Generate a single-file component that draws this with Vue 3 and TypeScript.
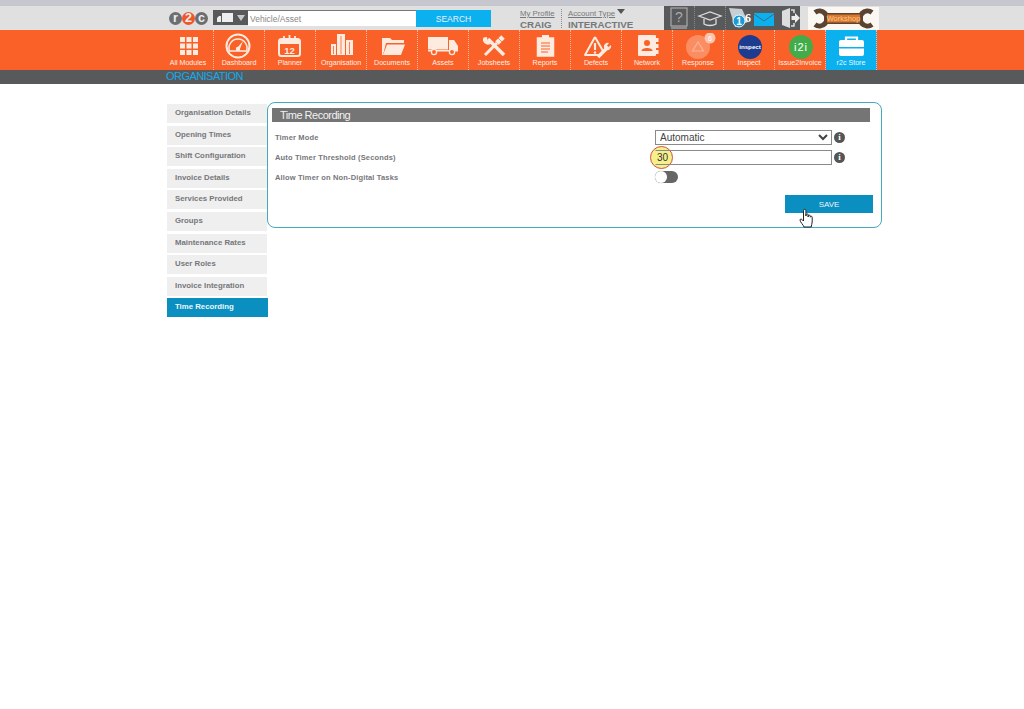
<script setup lang="ts">
interface NavItem { label: string; icon: string; active?: boolean }
const c = '#fdebdf'
const o = '#fa6128'
const squares = [0, 1, 2].flatMap(r => [0, 1, 2].map(k => `<rect x="${17 + k * 6.5}" y="${4 + r * 6.5}" width="5" height="5" fill="${c}"/>`)).join('')
const nav: NavItem[] = [
  { label: 'All Modules', icon: squares },
  { label: 'Dashboard', icon: `<circle cx="24" cy="13" r="11.5" fill="none" stroke="${c}" stroke-width="2"/><path d="M15.500 18a9 9 0 1 1 17 0z" fill="none" stroke="${c}" stroke-width="1.500"/><path d="M23 15l6-7-3.500 9z" fill="${c}"/><circle cx="24" cy="16" r="2.200" fill="${c}"/>` },
  { label: 'Planner', icon: `<rect x="14" y="6" width="21" height="17" rx="2.500" fill="none" stroke="${c}" stroke-width="2"/><rect x="14" y="6" width="21" height="5" fill="${c}"/><path d="M19 3v5M24.500 2v6M30 3v5" stroke="${c}" stroke-width="1.800"/><text x="24.500" y="21" font-size="9.500" font-weight="700" text-anchor="middle" fill="${c}" font-family="Liberation Sans">12</text>` },
  { label: 'Organisation', icon: `<path d="M15 11h5v11h-5zM21 1h8v21h-8zM30 7h7v15h-7z" fill="${c}"/><path d="M25 3v18M33.500 9v12M17.500 13v8" stroke="${o}" stroke-width=".8"/>` },
  { label: 'Documents', icon: `<path d="M15 5h8l2 2h12v3H19l-3 12h-1z" fill="${c}"/><path d="M20 11.500h18l-4 10.500H16z" fill="${c}"/>` },
  { label: 'Assets', icon: `<rect x="10" y="4" width="20" height="12.500" fill="${c}"/><path d="M31 7h5l4 6v4.500h-9z" fill="${c}"/><rect x="10" y="17" width="30" height="1.500" fill="${c}"/><circle cx="16" cy="19" r="2.600" fill="${o}" stroke="${c}" stroke-width="1.300"/><circle cx="34" cy="19" r="2.600" fill="${o}" stroke="${c}" stroke-width="1.300"/>` },
  { label: 'Jobsheets', icon: `<path d="M19 6l16 16" stroke="${c}" stroke-width="3.500"/><path d="M14.500 4.500a5 5 0 0 0 7 6.500l1-2-4-1-.5-4z" fill="${c}"/><path d="M16 22l12-12" stroke="${c}" stroke-width="3"/><path d="M28 10l6-6" stroke="${c}" stroke-width="5"/><path d="M29 5l4 4" stroke="${o}" stroke-width=".7"/>` },
  { label: 'Reports', icon: `<rect x="17.500" y="5" width="16" height="18" fill="${c}" stroke="${c}" stroke-width="1.500"/><rect x="22" y="2" width="7" height="4" fill="${c}"/><path d="M21 10h9M21 13h9M21 16h9M21 19h7" stroke="${o}" stroke-width="1.100"/>` },
  { label: 'Defects', icon: `<path d="M24 4L14 22h17" fill="none" stroke="${c}" stroke-width="2" stroke-linejoin="round"/><path d="M24 4l8 14" fill="none" stroke="${c}" stroke-width="2"/><path d="M24 10v7" stroke="${c}" stroke-width="2.200"/><circle cx="24" cy="19.500" r="1.200" fill="${c}"/><path d="M27 24l9-9" stroke="${c}" stroke-width="3.500"/><path d="M33 15a4 4 0 0 1 5-5l-2 2.500 1.500 1.500 2.500-2a4 4 0 0 1-5 5z" fill="${c}"/>` },
  { label: 'Network', icon: `<rect x="16" y="2" width="18" height="21" rx="1" fill="${c}"/><path d="M34 5h2.500v4H34zM34 11h2.500v4H34zM34 17h2.500v4H34z" fill="${c}"/><circle cx="25" cy="10" r="3" fill="${o}"/><path d="M19.500 18c0-4 11-4 11 0z" fill="${o}"/>` },
  { label: 'Response', icon: `<circle cx="25" cy="14" r="12" fill="#fb8d62"/><path d="M25 9l-5.500 9h11z" fill="none" stroke="#fdb394" stroke-width="1.200"/><circle cx="37" cy="5" r="5.500" fill="#fcc4ac"/><text x="37" y="7.500" font-size="7" text-anchor="middle" fill="#fff" font-family="Liberation Sans">6</text>` },
  { label: 'Inspect', icon: `<circle cx="26" cy="14" r="12" fill="#1d3b8f"/><text x="26" y="16" font-size="6.200" font-weight="700" text-anchor="middle" fill="#fff" font-family="Liberation Sans">inspect</text>` },
  { label: 'Issue2Invoice', icon: `<circle cx="26" cy="14" r="12" fill="#43ac4a"/><text x="26" y="18" font-size="11" text-anchor="middle" fill="#fff" letter-spacing="1" font-family="Liberation Sans">i2i</text>` },
  { label: 'r2c Store', active: true, icon: `<path d="M20 7V4.500h11V7" fill="none" stroke="#fff" stroke-width="2.200"/><path d="M13 9a2 2 0 0 1 2-2h21a2 2 0 0 1 2 2v5H13z" fill="#fff"/><path d="M13 15.500h25V21a2 2 0 0 1-2 2H15a2 2 0 0 1-2-2z" fill="#fff"/>` },
]
const sideItems = ['Organisation Details', 'Opening Times', 'Shift Configuration', 'Invoice Details', 'Services Provided', 'Groups', 'Maintenance Rates', 'User Roles', 'Invoice Integration', 'Time Recording']
</script>

<template>
  <div class="page">
    <div class="strip"></div>
    <header class="head">
      <div class="logo"><span class="ball">r</span><span class="ball two">2</span><span class="ball">c</span></div>
      <div class="asset-pick">
        <svg width="16" height="12" viewBox="0 0 16 12"><path d="M0 10V6l2-2h2v6zM5 1h11v9H5z" fill="#eee"/></svg>
        <span class="tri"></span>
      </div>
      <input class="asset-input" placeholder="Vehicle/Asset" />
      <button class="search">SEARCH</button>
      <div class="profile">
        <a class="small under">My Profile</a>
        <b class="big">CRAIG</b>
      </div>
      <div class="profile acct">
        <span class="small"><a class="under">Account Type</a><i class="acct-tri"></i></span>
        <b class="big">INTERACTIVE</b>
      </div>
      <div class="tools">
        <svg class="tool" width="30" height="24" viewBox="0 0 30 24"><rect x="7" y="2" width="16" height="18" fill="none" stroke="#aaa" stroke-width="1.200"/><rect x="7" y="20" width="16" height="3" fill="#8d8d8d"/><text x="15" y="16" font-size="14" text-anchor="middle" fill="#aaa" font-family="Liberation Sans">?</text></svg>
        <svg class="tool" width="30" height="24" viewBox="0 0 30 24"><path d="M4 10l11-4 11 4-11 4z" fill="none" stroke="#ddd" stroke-width="1.300"/><path d="M9 13v5c3 2 9 2 12 0v-5" fill="none" stroke="#ddd" stroke-width="1.300"/></svg>
        <div class="notice">
          <svg width="24" height="24" viewBox="0 0 24 24"><path d="M1 2l13 1 6 13-13 5z" fill="#c8ced2"/><circle cx="11" cy="15" r="6" fill="#1b9ad6" stroke="#dff" stroke-width="1"/><text x="11" y="18.500" font-size="10" font-weight="700" text-anchor="middle" fill="#fff" font-family="Liberation Sans">1</text></svg>
          <b class="six">6</b>
        </div>
        <svg class="mail" width="20" height="13" viewBox="0 0 20 13"><rect width="20" height="13" fill="#0bb0ef"/><path d="M0 1l10 7 10-7" fill="none" stroke="#58595b" stroke-width=".8"/></svg>
        <svg class="exit" width="18" height="20" viewBox="0 0 18 20"><path d="M0 3l8-3v20l-8-3z" fill="#ddd"/><path d="M9 2h3v3M12 15v3H9" fill="none" stroke="#ddd" stroke-width="1.500"/><path d="M9.500 8H13V5l5 5-5 5v-3H9.500z" fill="#eee"/></svg>
      </div>
      <div class="workshop">
        <svg width="71" height="23" viewBox="0 0 71 23">
          <path d="M7 5.500A7.500 7.500 0 1 1 7 17.500" fill="none" stroke="#5a4331" stroke-width="5"/>
          <path d="M64 5.500A7.500 7.500 0 1 0 64 17.500" fill="none" stroke="#5a4331" stroke-width="5"/>
          <rect x="16" y="6" width="39" height="11" fill="#5a4331"/>
          <rect x="19" y="7.500" width="33" height="8" fill="#d9772e"/>
          <text x="35.500" y="14" font-size="7.500" text-anchor="middle" fill="#f9c88c" font-family="Liberation Sans">Workshop</text>
        </svg>
      </div>
    </header>
    <nav class="nav">
      <a v-for="n in nav" :key="n.label" class="nav-item" :class="{ active: n.active }">
        <svg width="51" height="26" viewBox="0 0 51 26" v-html="n.icon"></svg>
        <span>{{ n.label }}</span>
      </a>
    </nav>
    <div class="crumb"><span>ORGANISATION</span></div>
    <main class="main">
      <aside class="side">
        <a v-for="s in sideItems" :key="s" class="side-item" :class="{ on: s === 'Time Recording' }">{{ s }}</a>
      </aside>
      <section class="panel">
        <h2 class="title">Time Recording</h2>
        <div class="row">
          <label>Timer Mode</label>
          <select class="field sel"><option>Automatic</option></select>
          <span class="info">i</span>
        </div>
        <div class="row">
          <label>Auto Timer Threshold (Seconds)</label>
          <div class="hl-wrap">
            <span class="hl"></span>
            <input class="field num" value="30" />
          </div>
          <span class="info">i</span>
        </div>
        <div class="row">
          <label>Allow Timer on Non-Digital Tasks</label>
          <span class="toggle"><i></i></span>
        </div>
        <div class="actions">
          <button class="save">SAVE</button>
          <svg class="hand" width="14" height="20" viewBox="0 0 14 20"><path d="M4.500 10V2.500a1.200 1.200 0 0 1 2.400 0V8l.2-1.200a1 1 0 0 1 2 .2V9l.2-1a1 1 0 0 1 2 .2v1l.2-.4a.9.900 0 0 1 1.700.4V14c0 2-1 3-1 5H5c-.5-2-4-5-4-7 0-1.500 2-1 3.500 1z" fill="#fff" stroke="#222" stroke-width="1"/></svg>
        </div>
      </section>
    </main>
  </div>
</template>

<style>
html, body { margin: 0; background: #fff; }
</style>

<style scoped>
.page { font-family: "Liberation Sans", Arial, sans-serif; width: 1024px; height: 709px; overflow: hidden; background: #fff; }
.strip { height: 6px; background: #c6c6ce; }
.head { height: 24px; background: #e0e0e0; display: flex; align-items: flex-start; padding-left: 169px; box-sizing: border-box; }
.logo { display: flex; width: 44px; margin-top: 6px; }
.ball { width: 13px; height: 13px; border-radius: 50%; background: #6d6e71; color: #eee; font-size: 12.500px; font-weight: 700; line-height: 12px; text-align: center; flex: none; }
.ball.two { background: #f0562a; }
.asset-pick { width: 35px; height: 15px; margin-top: 4px; background: #58595b; display: flex; align-items: center; padding-left: 4px; box-sizing: border-box; gap: 4px; }
.tri { border-left: 4px solid transparent; border-right: 4px solid transparent; border-top: 6px solid #c8c8c8; }
.asset-input { width: 168px; height: 16px; margin-top: 4px; box-sizing: border-box; border: 0; border-top: 1px solid #777; padding: 0 2px; font: 8.500px "Liberation Sans", sans-serif; background: #fff; outline: 0; }
.asset-input::placeholder { color: #888; opacity: 1; }
.search { width: 75px; height: 17px; margin-top: 4px; border: 0; padding: 0; background: #0bb0ef; color: #eef; font: 8.500px "Liberation Sans", sans-serif; }
.profile { display: flex; flex-direction: column; margin-left: 29px; margin-top: 3px; color: #77787b; width: 41px; border-right: 1px dotted #888; height: 19px; }
.acct { margin-left: 6px; width: 90px; border: 0; }
.small { font-size: 7.800px; line-height: 10px; color: #77787b; white-space: nowrap; }
.under { text-decoration: underline; }
.acct-tri { display: inline-block; margin-left: 2px; border-left: 4px solid transparent; border-right: 4px solid transparent; border-top: 5px solid #555; vertical-align: 2px; }
.big { font-size: 9.800px; line-height: 11px; white-space: nowrap; }
.tools { margin-left: 6px; width: 136px; height: 24px; background: #58595b; display: flex; align-items: center; }
.tool { border-right: 1px dotted #888; flex: none; }
.notice { width: 26px; height: 24px; position: relative; flex: none; margin-left: 2px; }
.six { position: absolute; left: 17px; top: 5px; color: #fff; font: 700 12px "Liberation Serif", serif; }
.mail { flex: none; margin-left: 0; margin-top: 2px; }
.exit { flex: none; margin-left: 8px; }
.workshop { margin-left: 8px; width: 71px; height: 23px; margin-top: 1px; background: #fbf7f2; }
.workshop svg { display: block; }
.nav { height: 40px; background: #fa6128; display: flex; padding-left: 163px; }
.nav-item { width: 51px; height: 40px; box-sizing: border-box; display: flex; flex-direction: column; align-items: center; padding-top: 3px; color: #fdeee5; font-size: 7.100px; line-height: 9px; white-space: nowrap; border-right: 1px dotted #fcb899; }
.nav-item svg { flex: none; margin-right: -1px; }
.nav-item span { margin-top: 0; }
.nav-item.active { background: #0bb0ef; color: #eaf8ff; }
.crumb { height: 14px; background: #58595b; padding-left: 166px; }
.crumb span { color: #14a9e6; font-size: 11px; line-height: 13px; display: block; letter-spacing: -.55px; }
.main { display: flex; padding: 18px 0 0 167px; }
.side { width: 100px; display: flex; flex-direction: column; gap: 2.600px; padding-top: 2px; }
.side-item { height: 19px; background: #efefef; color: #76777a; font-size: 7.800px; font-weight: 700; line-height: 18px; padding-left: 8px; box-sizing: border-box; }
.side-item.on { background: #0a8fc0; color: #eaf6fb; width: 101px; }
.panel { width: 615px; height: 126px; box-sizing: border-box; border: 1.500px solid #44a9bb; border-radius: 8px; padding: 5px 11px 0 4px; }
.title { margin: 0 0 5px; height: 14px; background: #757575; color: #f2f2f2; font-size: 11px; letter-spacing: -.5px; font-weight: 400; line-height: 14px; padding-left: 8px; }
.row { height: 20px; display: flex; align-items: center; }
.row label { width: 383px; padding-left: 3px; box-sizing: border-box; font-size: 7.500px; font-weight: 700; color: #76777a; letter-spacing: .15px; }
.field { width: 177px; height: 15px; box-sizing: border-box; padding: 0 2px; border: 1px solid #8a8a8a; background: #fff; font: 10px "Liberation Sans", sans-serif; color: #444; border-radius: 0; outline: 0; display: block; }
.sel { padding: 0; }
.num { padding: 0 1px; color: #333; background: transparent; position: relative; border-left-color: transparent; }
.info { margin-left: 2px; width: 11px; height: 11px; border-radius: 50%; background: #555; color: #fff; font: 700 9px/11px "Liberation Serif", serif; text-align: center; }
.hl-wrap { position: relative; }
.hl { position: absolute; left: -5px; top: -4px; width: 23px; height: 23px; box-sizing: border-box; border-radius: 50%; border: 1.500px solid #d2503f; background: #f6f08c; }
.toggle { width: 23px; height: 12px; border-radius: 6px; background: #666; display: block; position: relative; }
.toggle i { position: absolute; left: 0; top: 0; width: 12px; height: 12px; border-radius: 50%; background: #fff; box-shadow: 0 0 1px #888; }
.actions { position: relative; display: flex; justify-content: flex-end; margin-top: 8px; margin-right: -3px; }
.save { width: 88px; height: 18px; border: 0; padding: 0; background: #0a8fc0; color: #eaf6fb; font: 8px "Liberation Sans", sans-serif; }
.hand { position: absolute; left: 527px; top: 13px; }
</style>
